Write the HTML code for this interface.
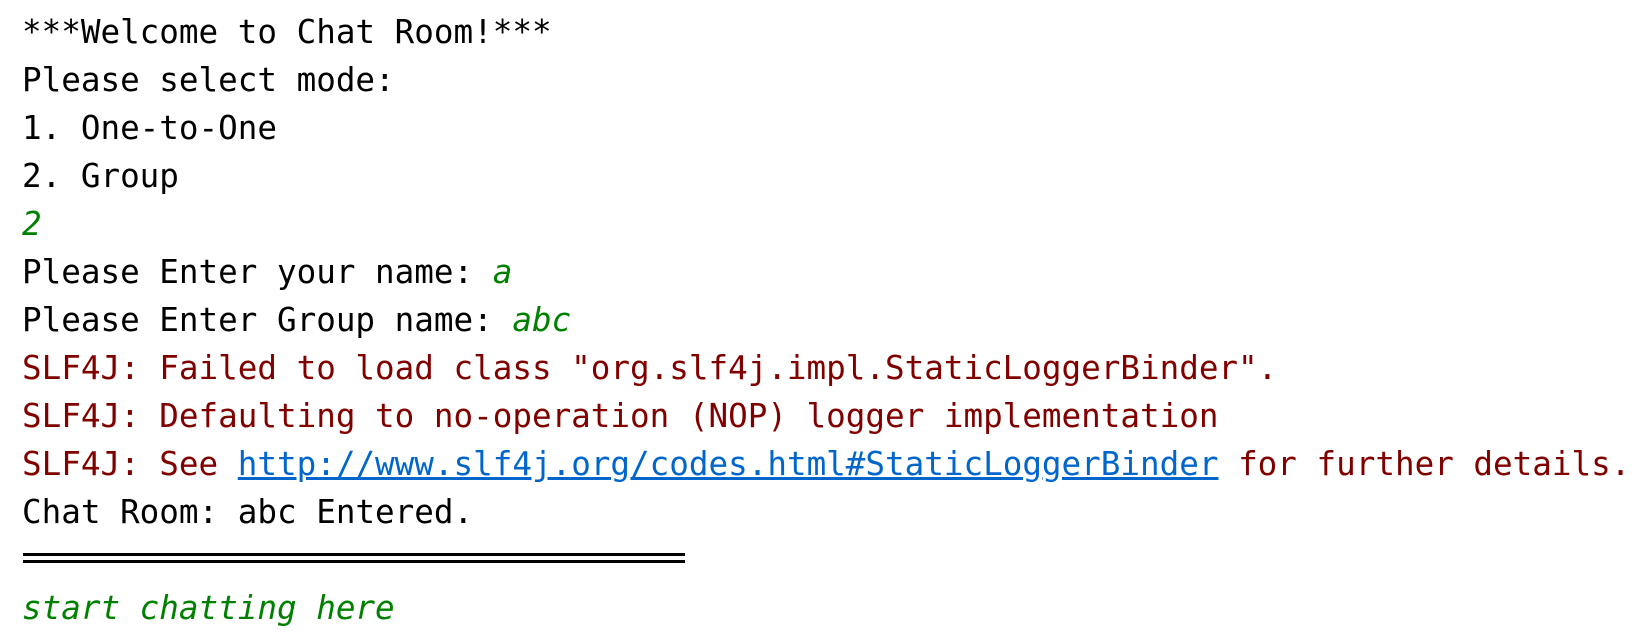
<!DOCTYPE html>
<html><head><meta charset="utf-8"><style>
html,body{margin:0;padding:0;background:#fff;width:1648px;height:628px;overflow:hidden}
.c{position:absolute;left:22px;top:8px;font-family:"DejaVu Sans Mono","Liberation Mono",monospace;font-size:32.6px;line-height:48px;color:#000;white-space:pre}
.g{color:#008000;font-style:italic}
.r{color:#800000}
a{color:#0066cc;text-decoration:underline}
.sep{position:absolute;left:23px;width:662px;height:3px;background:#000}
</style></head><body>
<div class="c">***Welcome to Chat Room!***
Please select mode:
1. One-to-One
2. Group
<span class="g">2</span>
Please Enter your name: <span class="g">a</span>
Please Enter Group name: <span class="g">abc</span>
<span class="r">SLF4J: Failed to load class "org.slf4j.impl.StaticLoggerBinder".</span>
<span class="r">SLF4J: Defaulting to no-operation (NOP) logger implementation</span>
<span class="r">SLF4J: See <a>http://www.slf4j.org/codes.html#StaticLoggerBinder</a> for further details.</span>
Chat Room: abc Entered.

<span class="g">start chatting here</span></div>
<div class="sep" style="top:553px"></div>
<div class="sep" style="top:560px"></div>
</body></html>
